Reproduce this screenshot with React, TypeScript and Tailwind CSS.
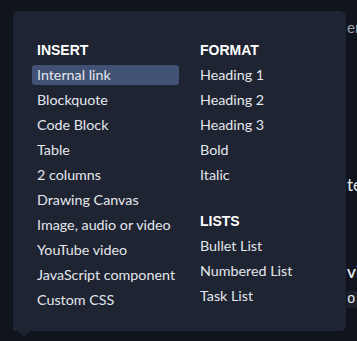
import React from "react";

const insertItems = [
  "Internal link",
  "Blockquote",
  "Code Block",
  "Table",
  "2 columns",
  "Drawing Canvas",
  "Image, audio or video",
  "YouTube video",
  "JavaScript component",
  "Custom CSS",
];

const formatItems = ["Heading 1", "Heading 2", "Heading 3", "Bold", "Italic"];
const listItems = ["Bullet List", "Numbered List", "Task List"];

const Header = ({ label }: { label: string }) => (
  <div className="h-5 flex items-center px-[5px] text-[14px] font-bold text-white uppercase [font-family:'Liberation_Sans',Arial,sans-serif]">
    {label}
  </div>
);

const Item = ({ label, active }: { label: string; active?: boolean }) => (
  <div
    className={
      "h-5 flex items-center px-[5px] pb-[1px] rounded-[3px] text-[14.3px] text-[#e4e7ec] whitespace-nowrap " +
      (active ? "bg-[#415274]" : "")
    }
  >
    {label}
  </div>
);

export default function App() {
  return (
    <div className="relative w-[357px] h-[341px] overflow-hidden bg-[#10141d] [font-family:Lato,'Noto_Sans',sans-serif]">
      {/* page content behind the menu */}
      <div className="flex flex-col pl-[347px] whitespace-nowrap text-[#9aa1ad]">
        <div className="mt-[16px] text-[15px]">enter</div>
        <div className="mt-[133px] text-[17px] text-[#e8eaee]">text</div>
        <div className="mt-[62px] text-[17px] font-semibold text-[#e8eaee]">view</div>
        <div className="mt-[6px] h-[17px] flex items-center bg-[#1c212b] text-[14px] text-[#e8eaee] [font-family:'Liberation_Mono',monospace]">
          olumns
        </div>
      </div>

      {/* popover */}
      <div className="absolute left-[13px] top-[11px] w-[333px] h-[320px] bg-[#1e2432] rounded-[6px] rounded-bl-none pl-[19px] pr-[4px] pt-[29px]">
        <div className="grid grid-cols-2 gap-x-[16px]">
          <div className="flex flex-col gap-[5px]">
            <Header label="Insert" />
            {insertItems.map((label, i) => (
              <Item key={label} label={label} active={i === 0} />
            ))}
          </div>
          <div className="flex flex-col gap-[5px]">
            <Header label="Format" />
            {formatItems.map((label) => (
              <Item key={label} label={label} />
            ))}
            <div className="mt-[21px]">
              <Header label="Lists" />
            </div>
            {listItems.map((label) => (
              <Item key={label} label={label} />
            ))}
          </div>
        </div>
        <svg className="absolute left-[5px] top-[320px]" width="12" height="6" viewBox="0 0 12 6">
          <path d="M0 0 L12 0 L6 6 Z" fill="#1e2432" />
        </svg>
      </div>
    </div>
  );
}
